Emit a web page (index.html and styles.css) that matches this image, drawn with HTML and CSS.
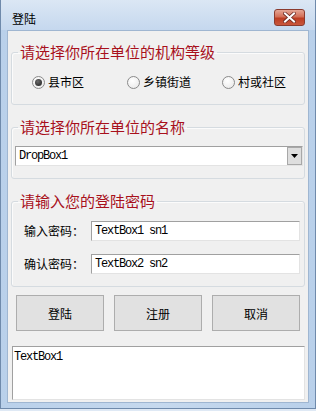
FILE: index.html
```html
<!DOCTYPE html>
<html lang="zh-CN">
<head>
  <meta charset="UTF-8" />
  <meta name="viewport" content="width=device-width, initial-scale=1" />
  <title>登陆</title>
  <link rel="stylesheet" href="styles.css">
</head>
<body>
  <div class="window">
    <div class="titlebar">
      <span class="title">登陆</span>
      <span class="closeBtn">
        <svg width="13" height="11" viewBox="0 0 13 11">
          <path d="M2 1.5 L11 9.5 M11 1.5 L2 9.5" stroke="#6b2a22" stroke-width="3.6" stroke-linecap="square" />
          <path d="M2 1.5 L11 9.5 M11 1.5 L2 9.5" stroke="#ffffff" stroke-width="2" stroke-linecap="square" />
        </svg>
      </span>
    </div>

    <div class="client">
      <fieldset class="group groupLevel">
        <legend>请选择你所在单位的机构等级</legend>
        <div class="radios">
          <label class="radio"><span class="radioDot checked"></span>县市区</label>
          <label class="radio"><span class="radioDot"></span>乡镇街道</label>
          <label class="radio"><span class="radioDot"></span>村或社区</label>
        </div>
      </fieldset>

      <fieldset class="group groupName">
        <legend>请选择你所在单位的名称</legend>
        <div class="dropBox">
          <span class="boxText">DropBox1</span>
          <span class="dropBtn">
            <svg width="7" height="4" viewBox="0 0 7 4"><path d="M0 0 H7 L3.5 4 Z" fill="#000" /></svg>
          </span>
        </div>
      </fieldset>

      <fieldset class="group groupPass">
        <legend>请输入您的登陆密码</legend>
        <div class="field">
          <span class="fieldLabel">输入密码：</span>
          <span class="textBox boxText">TextBox1 sn1</span>
        </div>
        <div class="field">
          <span class="fieldLabel">确认密码：</span>
          <span class="textBox boxText">TextBox2 sn2</span>
        </div>
      </fieldset>

      <div class="buttons">
        <button>登陆</button>
        <button>注册</button>
        <button>取消</button>
      </div>

      <div class="memo boxText">TextBox1</div>
    </div>
  </div>
</body>
</html>
```

FILE: styles.css
```css
body {
  margin: 0;
  background-color: #dfe9f5;
  font-family: "Noto Sans CJK SC", "Liberation Sans", sans-serif;
  font-size: 12px;
  color: #000;
}

.window {
  width: 316px;
  height: 409px;
  box-sizing: border-box;
  border: 1px solid #6f8aab;
  border-top: none;
  padding-bottom: 5px;
  background: linear-gradient(to right, #b9d0ea, #c6d9ee 50%, #b9d0ea);
}

.titlebar {
  height: 30px;
  box-sizing: border-box;
  padding: 8px 10px 0 11px;
  display: flex;
  align-items: center;
  justify-content: space-between;
  background: linear-gradient(#dbe7f4, #c5d8ee);
}

.title {
  font-size: 12px;
  line-height: 16px;
}

.closeBtn {
  width: 31px;
  height: 17px;
  box-sizing: border-box;
  margin-top: -3px;
  border: 1px solid #8b3b2e;
  border-radius: 3px;
  background: linear-gradient(#e5a695, #d36f57 45%, #bd3d22 55%, #c8573d);
  display: flex;
  align-items: center;
  justify-content: center;
}

.client {
  margin: 0 6px;
  height: 373px;
  box-sizing: border-box;
  border: 1px solid #9fb6d1;
  background-color: #f0f0f0;
  display: flex;
  flex-direction: column;
}

/* group boxes: legend sits at the fieldset's left padding, so keep it 0 */
.group {
  margin: 0 3px;
  padding-left: 0;
  padding-right: 0;
  border: 1px solid #d5dbe0;
  border-radius: 3px;
  box-shadow: inset 1px 1px 0 #fbfbfb;
  min-width: 0;
}

.group legend {
  margin-left: 6px;
  padding: 0 2px;
  font-size: 15px;
  line-height: 18px;
  color: #a8101c;
}

.groupLevel {
  margin-top: 12px;
  padding-top: 13px;
  padding-bottom: 14px;
}

.radios {
  margin-left: 20px;
  display: grid;
  grid-template-columns: 95px 95px 95px;
}

.radio {
  display: flex;
  align-items: center;
  gap: 3px;
  height: 16px;
  line-height: 16px;
}

.radioDot {
  width: 13px;
  height: 13px;
  box-sizing: border-box;
  border-radius: 50%;
  border: 1px solid #8a8a8a;
  background: radial-gradient(circle at 40% 35%, #ffffff, #e6e6e6);
  display: flex;
  align-items: center;
  justify-content: center;
}

.radioDot.checked::after {
  content: "";
  width: 7px;
  height: 7px;
  border-radius: 50%;
  background: radial-gradient(circle at 40% 35%, #6a6a6a, #1c1c1c);
}

.groupName {
  margin-top: 13px;
  padding-top: 10px;
  padding-bottom: 12px;
}

.boxText {
  font-family: "Liberation Mono", monospace;
  font-size: 12px;
  letter-spacing: -1.2px;
}

.dropBox {
  margin: 0 1px 0 3px;
  height: 20px;
  box-sizing: border-box;
  border: 1px solid #a0a0a0;
  border-right-color: #e3e3e3;
  border-bottom-color: #e3e3e3;
  background-color: #fff;
  display: flex;
  align-items: stretch;
  justify-content: space-between;
  line-height: 18px;
  padding-left: 3px;
}

.dropBtn {
  width: 15px;
  box-sizing: border-box;
  border: 1px solid #a8a8a8;
  background-color: #dedede;
  display: flex;
  align-items: center;
  justify-content: center;
}

.groupPass {
  margin-top: 13px;
  padding-top: 11px;
  padding-bottom: 12px;
  display: flex;
  flex-direction: column;
  gap: 13px;
}

.field {
  margin-left: 12px;
  display: flex;
  align-items: center;
}

.fieldLabel {
  width: 67px;
  line-height: 20px;
}

.textBox {
  width: 209px;
  height: 20px;
  box-sizing: border-box;
  border: 1px solid #a0a0a0;
  border-right-color: #e3e3e3;
  border-bottom-color: #e3e3e3;
  background-color: #fff;
  padding-left: 3px;
  line-height: 18px;
}

.buttons {
  margin-top: 8px;
  padding-left: 8px;
  display: flex;
  gap: 10px;
}

.buttons button {
  width: 88px;
  height: 36px;
  border: 1px solid #adadad;
  background-color: #e1e1e1;
  font-family: "Noto Sans CJK SC", sans-serif;
  font-size: 12px;
  color: #000;
  padding: 0;
}

.memo {
  margin: 15px 0 0 4px;
  width: 293px;
  height: 54px;
  box-sizing: border-box;
  border: 1px solid #a0a0a0;
  border-right-color: #e3e3e3;
  border-bottom-color: #e3e3e3;
  background-color: #fff;
  padding: 2px 1px;
  line-height: 16px;
}
```
